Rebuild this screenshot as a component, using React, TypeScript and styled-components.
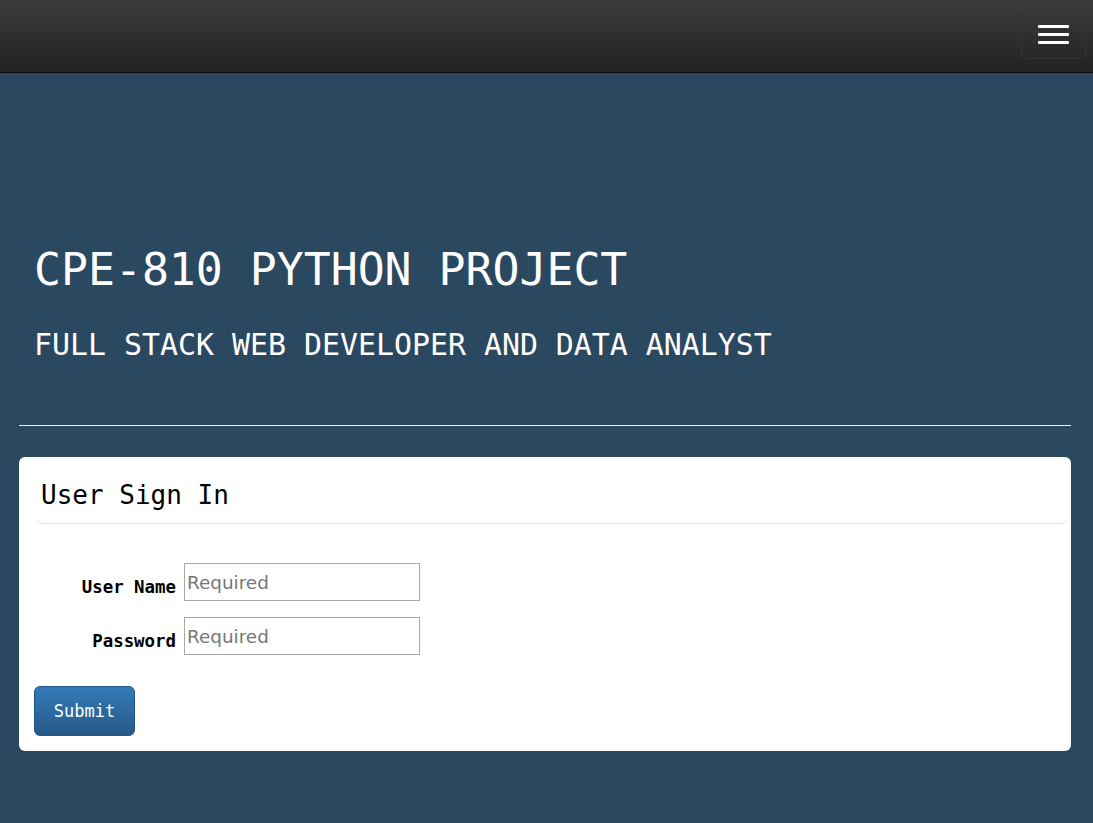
import React from 'react'
import styled, { createGlobalStyle } from 'styled-components'

const GlobalStyle = createGlobalStyle`
  html, body {
    margin: 0;
    padding: 0;
    background: #2b4861;
  }
  body {
    font-family: "DejaVu Sans Mono", "Liberation Mono", monospace;
    min-height: 823px;
  }
  * {
    box-sizing: border-box;
  }
`

// Top dark navbar with the burger toggle
const Navbar = styled.header`
  display: flex;
  justify-content: flex-end;
  align-items: flex-start;
  height: 73px;
  padding: 9px 7px 0 0;
  background: linear-gradient(to bottom, #3c3c3c 0%, #222 100%);
  border-bottom: 1px solid #080808;
`

const Toggle = styled.button`
  display: flex;
  flex-direction: column;
  justify-content: space-between;
  width: 65px;
  height: 50px;
  padding: 15px 16px 14px;
  background: transparent;
  border: 1px solid #333;
  border-radius: 5px;
  cursor: pointer;
`

const Bar = styled.span`
  display: block;
  height: 3px;
  width: 100%;
  background: #fff;
  border-radius: 1px;
`

const Main = styled.main`
  width: 1052px;
  margin-left: 19px;
  padding: 174px 0 72px;
`

const Hero = styled.section`
  display: flex;
  flex-direction: column;
  padding-left: 15px;
  color: #fff;
`

const Title = styled.h1`
  margin: 0;
  font-size: 44.8px;
  line-height: 45px;
  font-weight: 400;
`

const Subtitle = styled.h2`
  margin: 38px 0 0;
  font-size: 29.9px;
  line-height: 30px;
  font-weight: 400;
`

const Rule = styled.hr`
  margin: 65px 0 31px;
  border: 0;
  border-top: 1px solid #eee;
  height: 0;
`

const Card = styled.section`
  background: #fff;
  border-radius: 6px;
  padding: 15px;
`

const CardHeading = styled.div`
  margin: 0 -12px 0 1px;
  padding: 10px 6px 15px;
  border-bottom: 1px solid #e2e2e2;
  border-radius: 0 0 8px 8px;
`

const CardTitle = styled.h3`
  margin: 0;
  font-size: 26px;
  line-height: 26px;
  font-weight: 400;
  color: #000;
`

const Form = styled.form`
  display: flex;
  flex-direction: column;
  align-items: flex-start;
  margin-top: 39px;
`

const Fields = styled.div`
  display: grid;
  grid-template-columns: 142px 236px;
  column-gap: 8px;
  row-gap: 16px;
`

const Label = styled.label`
  align-self: end;
  justify-self: end;
  padding-bottom: 5px;
  font-size: 17.4px;
  line-height: 17px;
  font-weight: 700;
  color: #000;
`

const Input = styled.input`
  width: 236px;
  height: 38px;
  padding: 0 2px;
  border: 1px solid #a9a9a9;
  font-family: "DejaVu Sans", "Liberation Sans", sans-serif;
  font-size: 18.4px;
  color: #222;
  outline: none;

  &::placeholder {
    color: #777;
  }
`

const SubmitButton = styled.button`
  margin-top: 31px;
  width: 101px;
  height: 50px;
  font-family: "DejaVu Sans Mono", "Liberation Mono", monospace;
  font-size: 17px;
  color: #fff;
  background: linear-gradient(to bottom, #337ab7 0%, #265a88 100%);
  border: 1px solid #245580;
  border-radius: 6px;
  cursor: pointer;
`

export default function App() {
  return (
    <>
      <GlobalStyle />
      <Navbar>
        <Toggle type="button" aria-label="Toggle navigation">
          <Bar />
          <Bar />
          <Bar />
        </Toggle>
      </Navbar>
      <Main>
        <Hero>
          <Title>CPE-810 PYTHON PROJECT</Title>
          <Subtitle>FULL STACK WEB DEVELOPER AND DATA ANALYST</Subtitle>
        </Hero>
        <Rule />
        <Card>
          <CardHeading>
            <CardTitle>User Sign In</CardTitle>
          </CardHeading>
          <Form onSubmit={(e) => e.preventDefault()}>
            <Fields>
              <Label htmlFor="username">User Name</Label>
              <Input id="username" type="text" placeholder="Required" />
              <Label htmlFor="password">Password</Label>
              <Input id="password" type="password" placeholder="Required" />
            </Fields>
            <SubmitButton type="submit">Submit</SubmitButton>
          </Form>
        </Card>
      </Main>
    </>
  )
}
